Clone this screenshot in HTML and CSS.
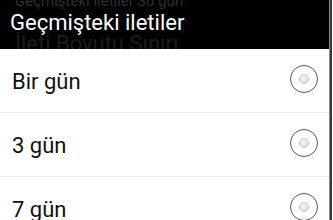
FILE: index.html
```html
<!DOCTYPE html>
<html lang="tr">
<head>
  <meta charset="UTF-8" />
  <title>Geçmişteki iletiler</title>
  <link rel="stylesheet" href="styles.css">
</head>
<body>
  <div class="dialog">
    <!-- Title bar, settings screen shows through behind it -->
    <header class="title-bar">
      <span class="ghost ghost-top">Geçmişteki iletiler 30 gün</span>
      <span class="ghost ghost-bottom">İleti Boyutu Sınırı</span>
      <h1>Geçmişteki iletiler</h1>
    </header>

    <ul class="options">
      <li class="option">
        <span class="label">Bir gün</span>
        <span class="radio"></span>
      </li>
      <li class="option">
        <span class="label">3 gün</span>
        <span class="radio"></span>
      </li>
      <li class="option">
        <span class="label">7 gün</span>
        <span class="radio"></span>
      </li>
    </ul>
  </div>
</body>
</html>
```

FILE: styles.css
```css
html, body {
  margin: 0;
  padding: 0;
  height: 100vh;
  overflow: hidden;
  background: #fff;
  font-family: Roboto, 'Noto Sans', sans-serif;
}

.dialog {
  height: 100vh;
  margin-right: 3px;
  border-right: 1px solid #8a8a8a;
  box-shadow: 2px 0 0 #3a3a3a;
  background: #fff;
}

.title-bar {
  position: relative;
  height: 49px;
  background: #000;
  overflow: hidden;
}

.title-bar h1 {
  position: relative;
  margin: 0;
  padding: 9px 0 0 10px;
  font-size: 22px;
  font-weight: 400;
  line-height: 28px;
  color: #fff;
}

.ghost {
  position: absolute;
  left: 15px;
  white-space: nowrap;
}

.ghost-top {
  top: -8px;
  font-size: 15px;
  color: #2e2e2e;
}

.ghost-bottom {
  top: 31px;
  font-size: 22px;
  color: #1c1c1c;
}

.options {
  list-style: none;
  margin: 0;
  padding: 0;
}

.option {
  display: flex;
  align-items: center;
  justify-content: space-between;
  height: 63px;
  padding: 0 11px 0 12px;
  border-bottom: 1px solid #ececec;
}

.label {
  font-size: 22px;
  color: #111;
  padding-top: 1px;
}

.radio {
  width: 26px;
  height: 26px;
  margin-bottom: 3px;
  border: 1.5px solid #555;
  border-radius: 50%;
  display: flex;
  align-items: center;
  justify-content: center;
}

.radio::after {
  content: '';
  width: 8px;
  height: 8px;
  border-radius: 50%;
  border: 1px solid #c8c8c8;
  background: radial-gradient(circle at 40% 35%, #f4f4f4, #d6d6d6);
}
```
